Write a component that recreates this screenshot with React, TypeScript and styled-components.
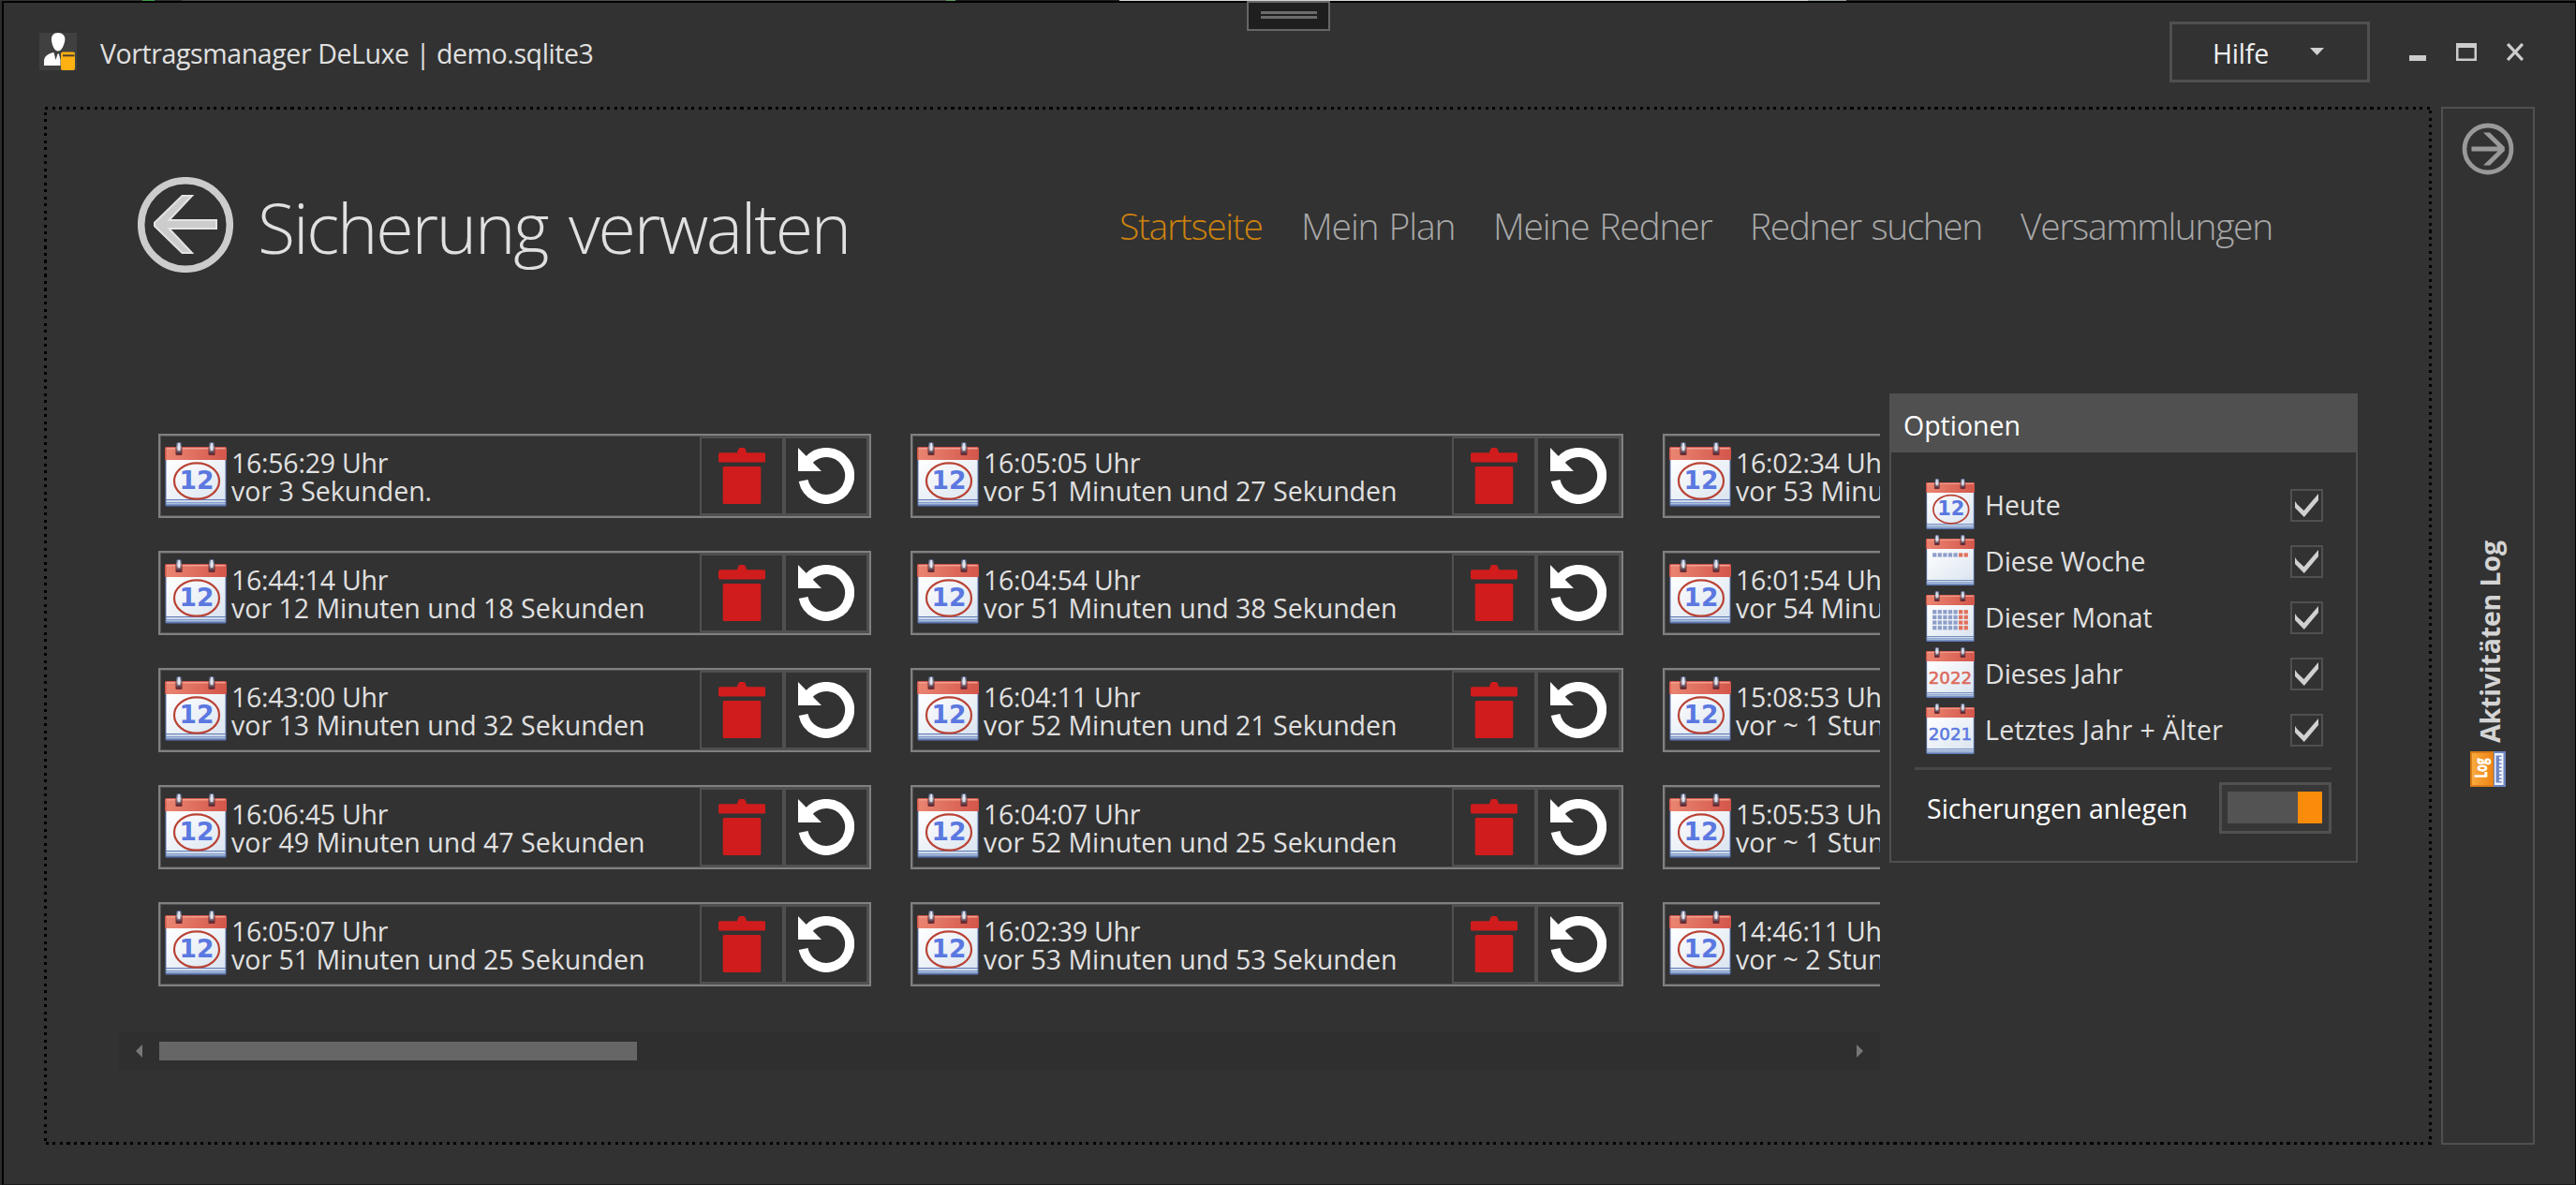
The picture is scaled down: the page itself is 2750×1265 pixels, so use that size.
import React from 'react';
import styled, { createGlobalStyle } from 'styled-components';

const Global = createGlobalStyle`
  *, *::before, *::after { box-sizing: border-box; }
  body {
    margin: 0;
    background: #323232;
    color: #e0e0e0;
    font: 400 28.5px 'Open Sans', 'Noto Sans', sans-serif;
    overflow: hidden;
  }
  button { font: inherit; color: inherit; background: none; border: 0; padding: 0; margin: 0; }
  svg { display: block; flex: none; }
`;

const LINE = '#505050';

const Desktop = styled.div`
  position: relative;
  width: 2750px;
  height: 1265px;
  padding: 1px 0 0 2px;
  background:
    linear-gradient(90deg, #333 0 152px, #3fa04a 152px 165px, #2c3230 165px 194px, #4a4f4c 194px 1010px, #58a05c 1010px 1020px, #1d1f1e 1020px 1195px, #cfd6d1 1195px 1930px, #9aa39e 1930px 1971px, #2b2d2c 1971px 100%) 0 0 / 100% 1px no-repeat,
    #2a2c2b;
`;

const Window = styled.div`
  height: 1264px;
  background: #323232;
  border: solid #000;
  border-width: 2px 1px 1px 2px;
  border-bottom-color: #1c1c1c;
`;

const Grip = styled.div`
  position: absolute;
  top: 1px;
  left: 1331px;
  width: 89px;
  height: 32px;
  padding-top: 9px;
  display: flex;
  flex-direction: column;
  align-items: center;
  gap: 2px;
  background: #1f1f1f;
  border: 2px solid #666;
`;

const GripLine = styled.span`
  width: 60px;
  height: 3px;
  background: #6b6b6b;
`;

const TitleBar = styled.header`
  height: 111px;
  display: flex;
  align-items: flex-start;
  padding: 20px 55px 0 38px;
`;

const TitleText = styled.h1`
  flex: 1;
  margin: 0 0 0 25px;
  padding-top: 12px;
  font-size: 28.5px;
  font-weight: 400;
  line-height: 44px;
  letter-spacing: -0.4px;
`;

const AppIconBox = styled.div`
  margin-top: 12px;
  width: 40px;
  height: 40px;
  background: #404040;
`;

const HelpButton = styled.button`
  width: 214px;
  height: 65px;
  display: flex;
  align-items: center;
  justify-content: space-between;
  padding: 3px 46px 0 43px;
  color: #f0f0f0;
  letter-spacing: -0.2px;
  border: 3px solid ${LINE};
  & > svg { margin-top: -5px; }
`;

const WindowControls = styled.div`
  display: flex;
  gap: 32px;
  margin: 23px 0 0 42px;
`;

const Body = styled.div`
  display: flex;
  gap: 10px;
  height: 1108px;
  padding-left: 43px;
`;

const dotsX = 'repeating-linear-gradient(90deg, #000 0 3px, transparent 3px 7.5px)';
const dotsY = 'repeating-linear-gradient(180deg, #000 0 3px, transparent 3px 7.5px)';

const Workspace = styled.main`
  width: 2549px;
  height: 1108px;
  background:
    ${dotsX} 1px 0 / 100% 3px no-repeat,
    ${dotsX} 2px 100% / 100% 3px no-repeat,
    ${dotsY} 0 6px / 3px 100% no-repeat,
    ${dotsY} 100% 4px / 3px 100% no-repeat;
`;

const PageHeader = styled.div`
  display: flex;
  height: 306px;
  padding: 75px 0 0 100px;
`;

const PageTitle = styled.h2`
  width: 920px;
  margin: 0 0 0 26px;
  padding-top: 3px;
  font-size: 73.5px;
  font-weight: 330;
  line-height: 102px;
  letter-spacing: -2.2px;
  word-spacing: 6px;
  white-space: nowrap;
`;

const Nav = styled.nav`
  display: flex;
  gap: 40px;
`;

const NavItem = styled.a<{ $active?: boolean; $track: number; $width: number }>`
  width: ${(p) => p.$width}px;
  padding-top: 1px;
  font-size: 39px;
  font-weight: 330;
  line-height: 102px;
  white-space: nowrap;
  word-spacing: 2px;
  letter-spacing: ${(p) => p.$track}px;
  color: ${(p) => (p.$active ? '#cc820f' : '#a8a8a8')};
`;

const Columns = styled.div`
  display: flex;
  align-items: flex-start;
  gap: 10px;
  padding-left: 80px;
`;

const BackupArea = styled.section`
  width: 1880px;
  padding-top: 43px;
  overflow: hidden;
`;

const BackupGrid = styled.div`
  display: grid;
  grid-auto-flow: column;
  grid-template-rows: repeat(5, 90px);
  grid-auto-columns: 761px;
  gap: 35px 42px;
  margin: 0 0 49px 42px;
`;

const Card = styled.article`
  display: flex;
  padding: 0 1px 0 5px;
  border: 2px solid #808080;
  box-shadow: inset 0 0 0 1px #525252;
`;

const CardIcon = styled.div`
  padding-top: 7px;
  width: 71px;
`;

const CardText = styled.div`
  flex: 1;
  padding-top: 14px;
  line-height: 30px;
  white-space: nowrap;
`;

const CardTime = styled.div`
  letter-spacing: -0.25px;
`;

const CardButton = styled.button`
  width: 90px;
  height: 86px;
  display: flex;
  align-items: center;
  justify-content: center;
  border: 2px solid ${LINE};
  border-width: 3px 2px;
`;

const ScrollBar = styled.div`
  height: 40px;
  display: flex;
  align-items: center;
  padding: 0 18px;
  background: #2f2f2f;
`;

const ScrollTrack = styled.div`
  flex: 1;
  padding: 0 18px;
`;

const ScrollThumb = styled.div`
  width: 510px;
  height: 20px;
  background: #666;
`;

const Options = styled.aside`
  width: 500px;
  height: 501px;
  border: 2.5px solid ${LINE};
`;

const OptionsHeader = styled.div`
  height: 61px;
  padding: 2px 0 0 13px;
  line-height: 60px;
  color: #fff;
  background: ${LINE};
`;

const OptionList = styled.ul`
  list-style: none;
  margin: 0 26px 0 25px;
  padding: 26px 9px 10px 12px;
  border-bottom: 3px solid #484848;
`;

const OptionRow = styled.li`
  height: 60px;
  display: flex;
  align-items: center;
`;

const OptionLabel = styled.span<{ $track?: number }>`
  flex: 1;
  padding: 0 0 0 11px;
  line-height: 60px;
  letter-spacing: ${(p) => p.$track ?? 0}px;
`;

const CheckBox = styled.span`
  width: 35px;
  height: 35px;
  display: flex;
  align-items: center;
  justify-content: center;
  border: 2px solid ${LINE};
`;

const ToggleRow = styled.div`
  display: flex;
  align-items: center;
  justify-content: space-between;
  padding: 13px 26px 0 38px;
  color: #fff;
`;

const Toggle = styled.span`
  width: 120px;
  height: 55px;
  display: flex;
  padding: 7px 7px 8px 6px;
  background: #373737;
  border: 3px solid ${LINE};
`;

const ToggleTrack = styled.span`
  flex: 1;
  display: flex;
  justify-content: flex-end;
  background: #535353;
`;

const ToggleKnob = styled.span`
  width: 26px;
  background: #fb8c0b;
`;

const LogPanel = styled.aside`
  width: 100px;
  height: 1108px;
  display: flex;
  flex-direction: column;
  align-items: center;
  padding-top: 15px;
  border: 2.5px solid ${LINE};
`;

const LogTitle = styled.div`
  flex: none;
  height: 606px;
  margin: 0 0 9px 4px;
  writing-mode: vertical-rl;
  transform: rotate(180deg);
  font-weight: 700;
  font-size: 28.5px;
  line-height: 38px;
  letter-spacing: -0.15px;
  color: #d4d4d4;
  white-space: nowrap;
`;

type CalendarKind = 'day' | 'week' | 'month' | '2022' | '2021';

function Calendar({ kind, size = 66 }: { kind: CalendarKind; size?: number }) {
  const rows = kind === 'week' ? 1 : kind === 'month' ? 4 : 0;
  const top = kind === 'week' ? 22 : 20;
  return (
    <svg width={size} height={(size * 70) / 66} viewBox="0 0 66 70">
      <defs>
        <linearGradient id="calPage" x1="0" y1="0" x2="1" y2="1">
          <stop offset="0" stopColor="#ffffff" />
          <stop offset="1" stopColor="#dbe5f0" />
        </linearGradient>
        <linearGradient id="calHead" x1="0" y1="0" x2="1" y2="0">
          <stop offset="0" stopColor="#ea8571" />
          <stop offset="1" stopColor="#d4574b" />
        </linearGradient>
        <linearGradient id="calRing" x1="0" y1="0" x2="0" y2="1">
          <stop offset="0" stopColor="#53638f" />
          <stop offset="0.5" stopColor="#c8ccd8" />
          <stop offset="1" stopColor="#4a2c3a" />
        </linearGradient>
      </defs>
      <rect x="0.5" y="6" width="65" height="62.5" rx="1.5" fill="#6079b4" />
      <rect x="1.5" y="19" width="63" height="42" fill="url(#calPage)" />
      <rect x="1.5" y="62" width="63" height="2" fill="#cfdcec" />
      <rect x="1.5" y="64.5" width="63" height="2" fill="#a9bfdc" />
      <rect x="0" y="5" width="66" height="14" rx="1.5" fill="#d2554a" />
      <rect x="1.5" y="6.5" width="63" height="12.5" fill="url(#calHead)" />
      <rect x="1.5" y="6" width="63" height="1.5" fill="#f0a08f" />
      {[12.5, 47.5].map((x) => (
        <g key={x}>
          <rect x={x - 1} y="5" width="7" height="9" rx="1" fill="#6b2d33" />
          <rect x={x} y="0" width="5" height="12" rx="1.5" fill="url(#calRing)" />
          <rect x={x + 1.7} y="1" width="1.8" height="8" fill="#e8eaf0" />
        </g>
      ))}
      {kind === 'day' && (
        <>
          <text x="34" y="50" textAnchor="middle" fontFamily="'DejaVu Sans', sans-serif" fontWeight="700" fontSize="26.5" textLength="37" lengthAdjust="spacingAndGlyphs" fill="#5b78e0">12</text>
          <ellipse cx="34" cy="41.5" rx="24" ry="19.2" fill="none" stroke="#b94335" strokeWidth="2.2" />
        </>
      )}
      {Array.from({ length: rows * 7 }, (_, i) => (
        <rect key={i} x={9 + (i % 7) * 7.1} y={top + 5.5 + Math.floor(i / 7) * 7.2 - (rows === 1 ? 3 : 0)} width="5.4" height="5.4" fill={i % 7 > 4 ? '#e2705c' : '#8f9fca'} />
      ))}
      {(kind === '2022' || kind === '2021') && (
        <text x="33" y="50" textAnchor="middle" fontFamily="'DejaVu Sans', sans-serif" fontWeight="400" fontSize="23.5" textLength="59" lengthAdjust="spacingAndGlyphs" fill={kind === '2022' ? '#dd6a5c' : '#5b78e0'} stroke={kind === '2022' ? '#dd6a5c' : '#5b78e0'} strokeWidth="0.7">{kind}</text>
      )}
    </svg>
  );
}

const TrashIcon = () => (
  <svg width="60" height="60" viewBox="0 0 60 60" fill="#d01c1c">
    <path d="M24.5 6 L26.5 1 Q27 0 28 0 H32 Q33 0 33.500 1 L35.500 6Z" />
    <rect x="5" y="5.300" width="50" height="10.200" rx="1.500" />
    <rect x="9.700" y="20" width="40.600" height="40" rx="1.500" />
  </svg>
);

const RestoreIcon = () => (
  <svg width="60" height="60" viewBox="0 0 60 60">
    <path d="M11.500 13.200 A25 25 0 1 1 5.600 35" fill="none" stroke="#fff" strokeWidth="10" />
    <path d="M0 0 L8.600 8.800 L16 16 L25 25 H0Z" fill="#fff" />
  </svg>
);

const CheckIcon = () => (
  <svg width="27" height="27" viewBox="0 0 27 27">
    <path d="M1 9 L3.500 12.500 L10.500 19 L26 1 V8 L10.800 26 L1 16Z" fill="#d0d0d0" />
  </svg>
);

const AppIcon = () => (
  <svg width="40" height="40" viewBox="0 0 40 40">
    <path d="M20 0 C15 0 12.500 3.500 13 8 C13.500 13 16 19.500 20 19.500 C24 19.500 26.500 13 27.300 8 C28 3 24.500 0 20 0Z" fill="#fff" />
    <path d="M15.500 21 L17.500 29 L19.500 22.500 H21 L22.500 29 V35 H5 V30.500 C5 25 9 22.500 15.500 21Z" fill="#fff" />
    <rect x="23" y="20.500" width="15" height="19.500" rx="2" fill="#ffb013" />
    <rect x="25" y="23.300" width="12.500" height="2" fill="#4a4030" />
  </svg>
);

const BackIcon = () => (
  <svg width="102" height="102" viewBox="0 0 102 102">
    <circle cx="51" cy="51" r="47.300" fill="none" stroke="#ccc" strokeWidth="7.500" />
    <path d="M18 48.700 L47.500 20 H58 L33.500 46 H84 V55 H33.500 L58 81 H47.500 L18 52.300Z" fill="#ccc" stroke="#e4e4e4" strokeWidth="2" />
  </svg>
);

const ForwardIcon = () => (
  <svg width="56" height="56" viewBox="0 0 56 56">
    <circle cx="28" cy="28" r="25" fill="none" stroke="#999" strokeWidth="4.800" />
    <path d="M10.500 25.500 H38.500 L23 10.500 H30 L45.800 26 V30 L30 45.500 H23 L38.500 30.500 H10.500Z" fill="#999" />
  </svg>
);

const LogIcon = () => (
  <svg width="38" height="38" viewBox="0 0 38 38">
    <defs>
      <linearGradient id="logFace" x1="0" y1="0" x2="1" y2="0">
        <stop offset="0" stopColor="#f8ab3e" />
        <stop offset="1" stopColor="#ee8414" />
      </linearGradient>
    </defs>
    <rect width="25" height="38" fill="#d97c18" />
    <rect x="2" y="2" width="22" height="34" fill="url(#logFace)" />
    <text transform="translate(18 28.500) rotate(-90)" fontFamily="'Open Sans', sans-serif" fontWeight="700" fontSize="17" textLength="21" lengthAdjust="spacingAndGlyphs" fill="#fff" stroke="#fff" strokeWidth="0.5">Log</text>
    <rect x="25" width="13" height="38" fill="#6b84c0" />
    <rect x="26" y="2" width="9.500" height="34" fill="#eef2fa" />
    <rect x="27.500" y="4.500" width="6" height="29" fill="#6f87c4" />
    <path d="M32.500 6 V32" stroke="#eef2fa" strokeWidth="3" strokeDasharray="2.500 1.500" />
  </svg>
);

const backups: [string, string][] = [
  ['16:56:29 Uhr', 'vor 3 Sekunden.'],
  ['16:44:14 Uhr', 'vor 12 Minuten und 18 Sekunden'],
  ['16:43:00 Uhr', 'vor 13 Minuten und 32 Sekunden'],
  ['16:06:45 Uhr', 'vor 49 Minuten und 47 Sekunden'],
  ['16:05:07 Uhr', 'vor 51 Minuten und 25 Sekunden'],
  ['16:05:05 Uhr', 'vor 51 Minuten und 27 Sekunden'],
  ['16:04:54 Uhr', 'vor 51 Minuten und 38 Sekunden'],
  ['16:04:11 Uhr', 'vor 52 Minuten und 21 Sekunden'],
  ['16:04:07 Uhr', 'vor 52 Minuten und 25 Sekunden'],
  ['16:02:39 Uhr', 'vor 53 Minuten und 53 Sekunden'],
  ['16:02:34 Uhr', 'vor 53 Minuten'],
  ['16:01:54 Uhr', 'vor 54 Minuten'],
  ['15:08:53 Uhr', 'vor ~ 1 Stunde'],
  ['15:05:53 Uhr', 'vor ~ 1 Stunde'],
  ['14:46:11 Uhr', 'vor ~ 2 Stunden'],
];

const navItems: { label: string; width: number; track: number }[] = [
  { label: 'Startseite', width: 154, track: -1.35 },
  { label: 'Mein Plan', width: 165, track: -1.1 },
  { label: 'Meine Redner', width: 234, track: -1.2 },
  { label: 'Redner suchen', width: 249, track: -1.45 },
  { label: 'Versammlungen', width: 273, track: -1.35 },
];

const options: { kind: CalendarKind; label: string; track?: number }[] = [
  { kind: 'day', label: 'Heute' },
  { kind: 'week', label: 'Diese Woche' },
  { kind: 'month', label: 'Dieser Monat' },
  { kind: '2022', label: 'Dieses Jahr' },
  { kind: '2021', label: 'Letztes Jahr + Älter', track: 0.3 },
];

export default function App() {
  return (
    <>
      <Global />
      <Desktop>
        <Window>
          <TitleBar>
            <AppIconBox><AppIcon /></AppIconBox>
            <TitleText>Vortragsmanager DeLuxe | demo.sqlite3</TitleText>
            <HelpButton>
              Hilfe
              <svg width="15" height="8" viewBox="0 0 15 8"><path d="M0 0H15L7.500 8Z" fill="#d0d0d0" /></svg>
            </HelpButton>
            <WindowControls>
              <svg width="18" height="19" viewBox="0 0 18 19"><rect y="13" width="18" height="6" fill="#ccc" /></svg>
              <svg width="22" height="19" viewBox="0 0 22 19"><path d="M0 0H22V19H0Z M2.500 5V16.500H19.500V5Z" fillRule="evenodd" fill="#ccc" /></svg>
              <svg width="18" height="19" viewBox="0 0 18 19"><path d="M1 1L17 18M17 1L1 18" stroke="#ccc" strokeWidth="3.300" /></svg>
            </WindowControls>
          </TitleBar>
          <Body>
            <Workspace>
              <PageHeader>
                <BackIcon />
                <PageTitle>Sicherung verwalten</PageTitle>
                <Nav>
                  {navItems.map((n, i) => (
                    <NavItem key={n.label} $active={i === 0} $track={n.track} $width={n.width}>{n.label}</NavItem>
                  ))}
                </Nav>
              </PageHeader>
              <Columns>
                <BackupArea>
                  <BackupGrid>
                    {backups.map(([time, age]) => (
                      <Card key={time}>
                        <CardIcon><Calendar kind="day" /></CardIcon>
                        <CardText>
                          <CardTime>{time}</CardTime>
                          <div>{age}</div>
                        </CardText>
                        <CardButton><TrashIcon /></CardButton>
                        <CardButton><RestoreIcon /></CardButton>
                      </Card>
                    ))}
                  </BackupGrid>
                  <ScrollBar>
                    <svg width="7" height="14" viewBox="0 0 7 14"><path d="M7 0V14L0 7Z" fill="#777" /></svg>
                    <ScrollTrack><ScrollThumb /></ScrollTrack>
                    <svg width="7" height="14" viewBox="0 0 7 14"><path d="M0 0V14L7 7Z" fill="#777" /></svg>
                  </ScrollBar>
                </BackupArea>
                <Options>
                  <OptionsHeader>Optionen</OptionsHeader>
                  <OptionList>
                    {options.map((o) => (
                      <OptionRow key={o.kind}>
                        <Calendar kind={o.kind} size={52} />
                        <OptionLabel $track={o.track}>{o.label}</OptionLabel>
                        <CheckBox><CheckIcon /></CheckBox>
                      </OptionRow>
                    ))}
                  </OptionList>
                  <ToggleRow>
                    Sicherungen anlegen
                    <Toggle><ToggleTrack><ToggleKnob /></ToggleTrack></Toggle>
                  </ToggleRow>
                </Options>
              </Columns>
            </Workspace>
            <LogPanel>
              <ForwardIcon />
              <LogTitle>Aktivitäten Log</LogTitle>
              <LogIcon />
            </LogPanel>
          </Body>
        </Window>
        <Grip><GripLine /><GripLine /></Grip>
      </Desktop>
    </>
  );
}
